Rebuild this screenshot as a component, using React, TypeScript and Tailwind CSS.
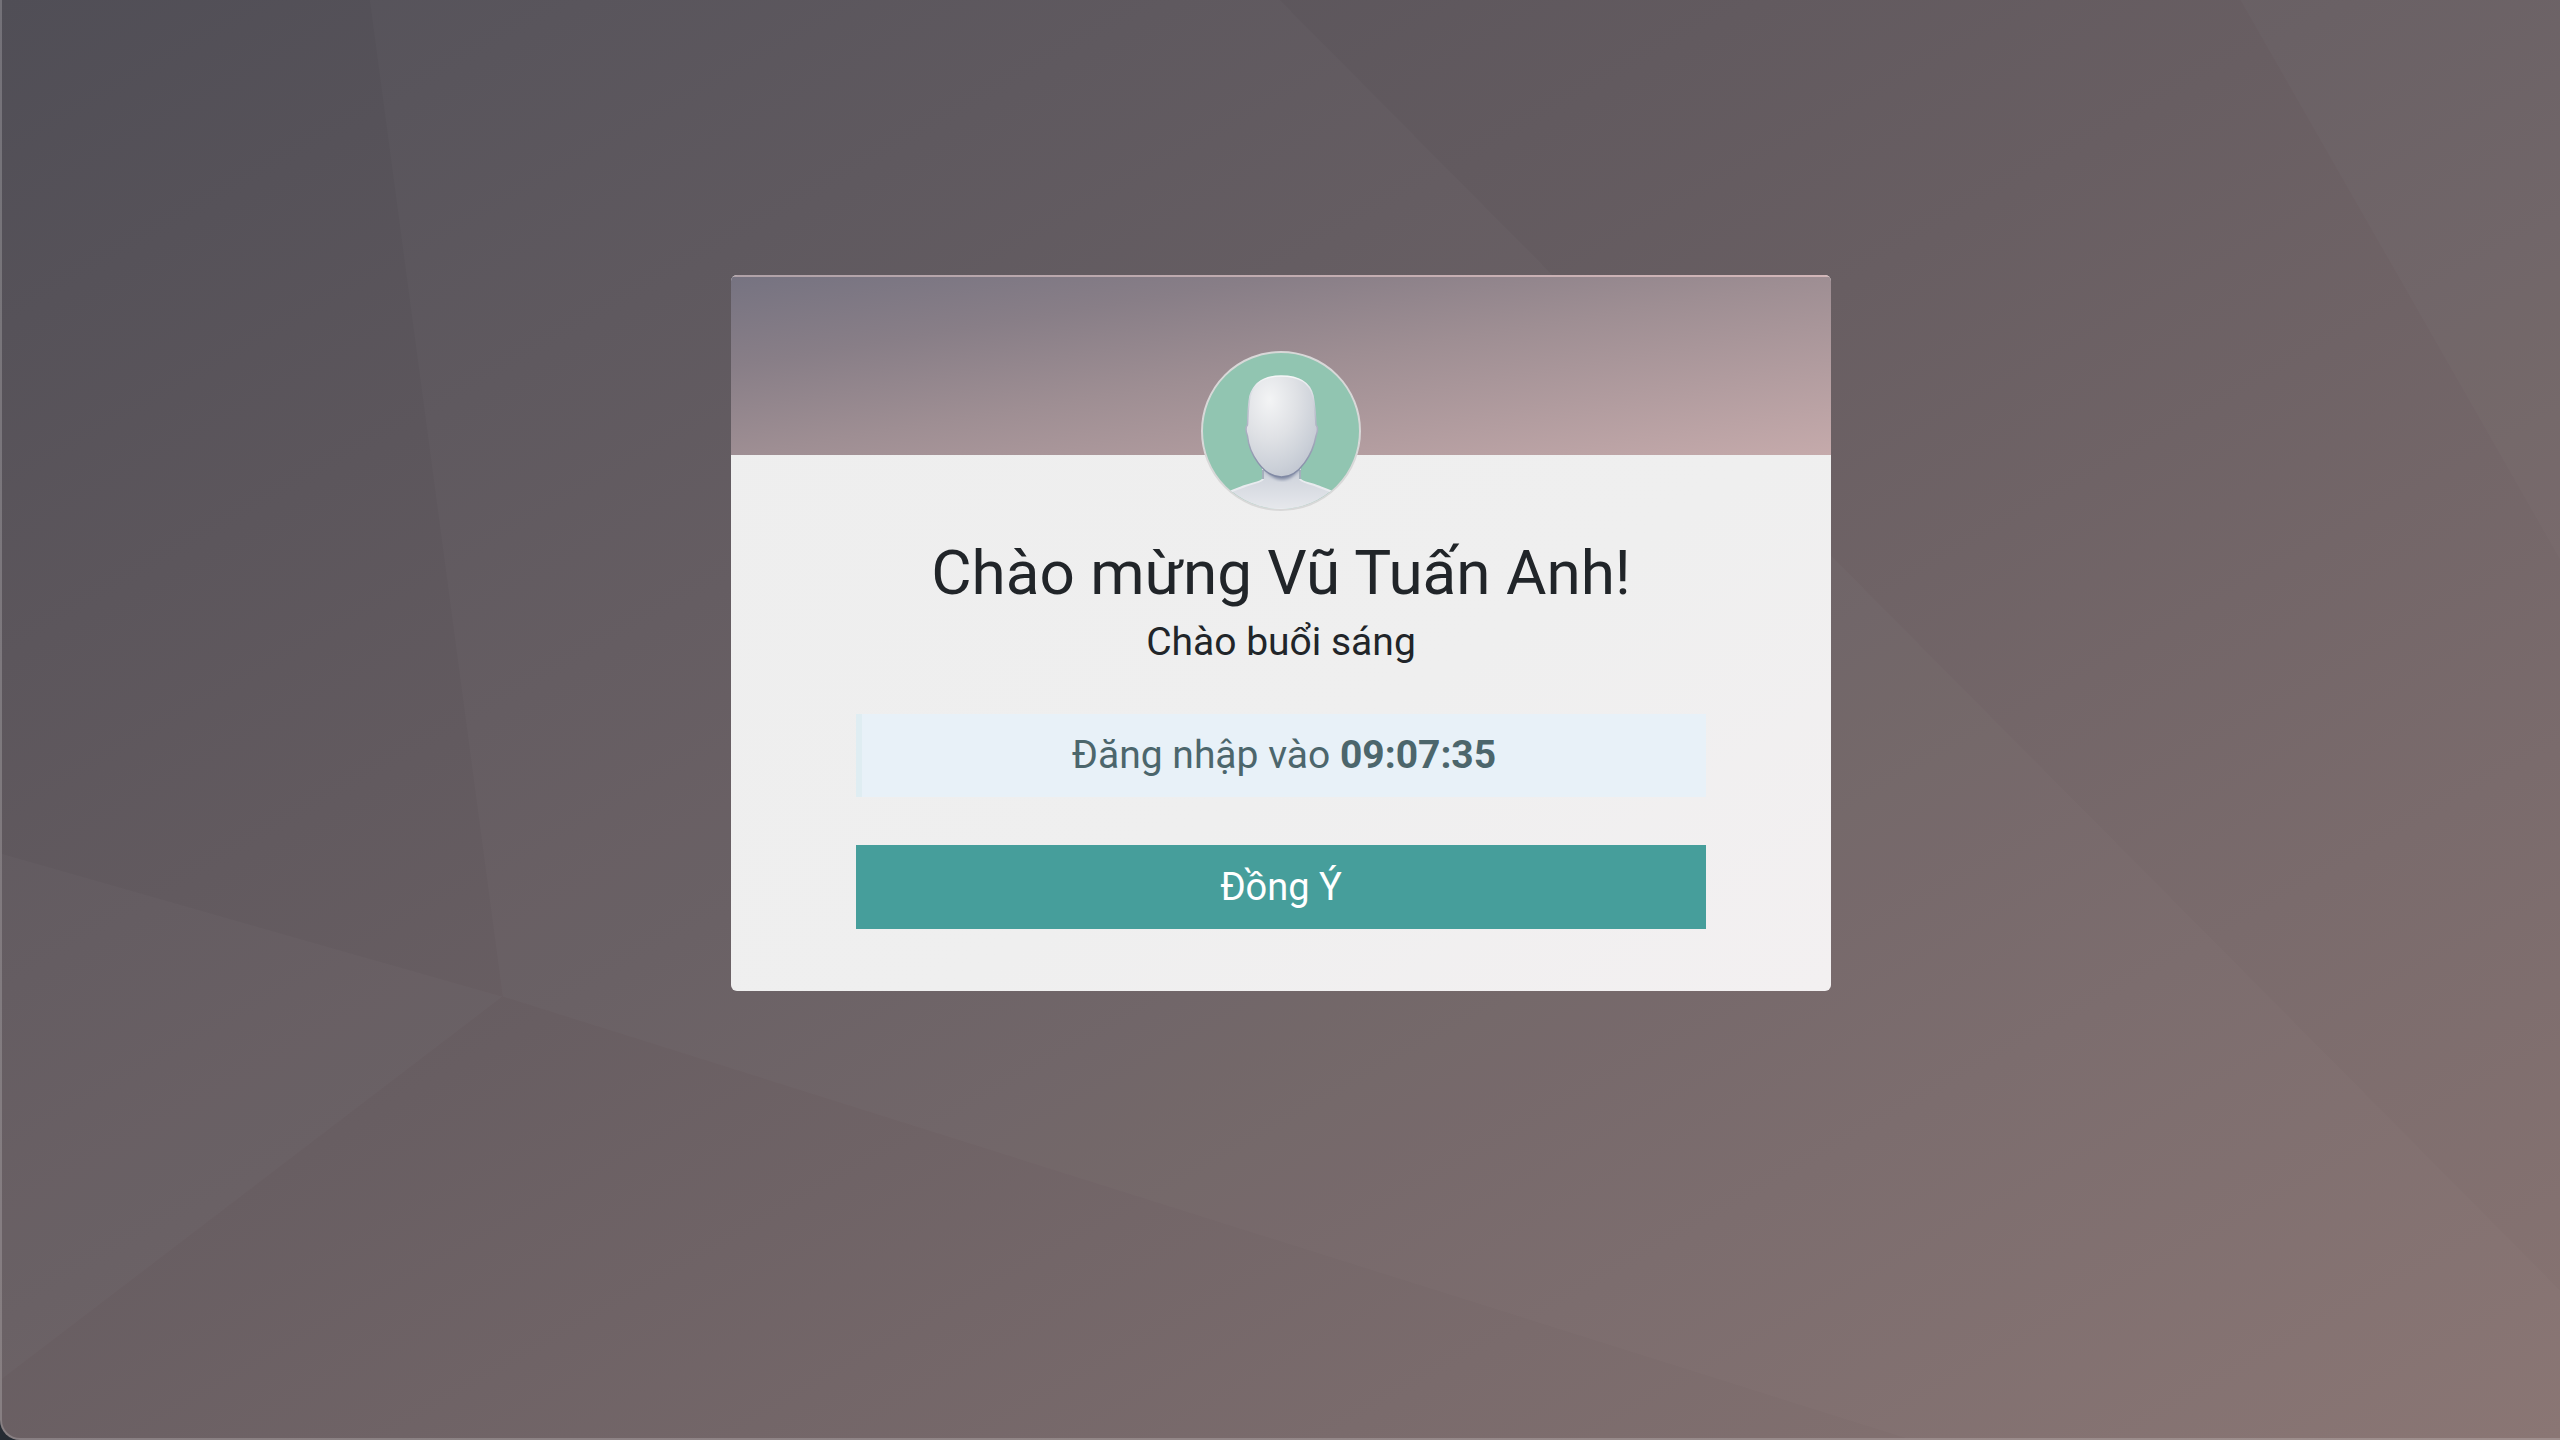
function Backdrop() {
  return (
    <svg className="absolute inset-0 h-full w-full" viewBox="0 0 2560 1440" preserveAspectRatio="none" aria-hidden="true">
      <g fill="#ffffff" fillOpacity="0.018">
        <path d="M368 0H1279L2560 1292V1440H1905L501 998Z" />
        <path d="M0 855L501 998L0 1381Z" />
        <path d="M2240 0H2560V560Z" />
      </g>
    </svg>
  );
}

function Avatar() {
  return (
    <div className="relative z-10 mx-auto -mt-[104px] h-40 w-40 overflow-hidden rounded-full border-2 border-[#d8d8d8] bg-[#91c5b1]">
      <svg viewBox="0 0 156 156" className="h-full w-full" role="img" aria-label="Avatar">
        <defs>
          <radialGradient id="head" cx="0.33" cy="0.24" r="0.85">
            <stop offset="0" stopColor="#f3f4f5" />
            <stop offset="0.45" stopColor="#dfe1e5" />
            <stop offset="0.8" stopColor="#cbd0d8" />
            <stop offset="1" stopColor="#bfc4cf" />
          </radialGradient>
          <linearGradient id="body" x1="0" y1="0" x2="0" y2="1">
            <stop offset="0" stopColor="#b9c1ce" />
            <stop offset="0.3" stopColor="#d2d6de" />
            <stop offset="1" stopColor="#e6e8ec" />
          </linearGradient>
          <linearGradient id="edge" x1="0" y1="0" x2="0" y2="1">
            <stop offset="0" stopColor="#f6f7f8" />
            <stop offset="0.4" stopColor="#b9bccb" />
            <stop offset="1" stopColor="#7f88a3" />
          </linearGradient>
          <filter id="soft">
            <feGaussianBlur stdDeviation="1.6" />
          </filter>
        </defs>
        <path
          d="M60 112V126C59 129 50 130 42 133C34 136 28 138 20 142V156H136V142C128 138 122 136 114 133C106 130 98 129 97 126V112Z"
          fill="url(#body)"
          stroke="#e9ebef"
          strokeWidth="2"
        />
        <path d="M60 117V126M97 117V126" stroke="#8d9cab" strokeWidth="1.5" />
        <path d="M60 114C66 123 72 127 79 127S92 123 98 114Z" fill="#8790a8" filter="url(#soft)" />
        <path
          d="M78 23C97 23 107 30 110 43C112 54 112.500 63 113 72C115 74 114.500 79 113 83C110 100 97 124 78.500 124S46 100 44.500 83C43 79 42.500 74 44.500 72C45 63 45 54 47 43C51 30 60 23 78 23Z"
          fill="url(#head)"
          stroke="url(#edge)"
          strokeWidth="1.5"
        />
      </svg>
    </div>
  );
}

export default function App() {
  return (
    <div className="bg-[#252b33] font-[Roboto,sans-serif]">
      <main className="relative min-h-screen overflow-hidden rounded-bl-[20px] border-b-2 border-l-2 border-white/20 bg-[linear-gradient(to_bottom_right,#504e56_0%,#685e62_46%,#7a6b6c_76%,#887472_100%)] bg-origin-border pt-[275px]">
        <Backdrop />
        <section className="relative mx-auto max-w-[1100px] overflow-hidden rounded-md bg-[linear-gradient(to_bottom_right,#eeeeee,#efefef_60%,#f3f0f1)]">
          <div className="h-0.5 bg-[linear-gradient(to_right,#b0a2a8,#d2b6b8)]" />
          <div className="h-[178px] bg-[linear-gradient(to_bottom_right,#767381_0%,#887e87_25%,#9e8e93_50%,#c5aaab_100%)]" />
          <Avatar />
          <div className="px-[125px] pt-6 pb-[62px] text-center text-[#212529]">
            <h1 className="text-[62px] leading-[75px]">Chào mừng Vũ Tuấn Anh!</h1>
            <p className="text-[39px] leading-[64px]">Chào buổi sáng</p>
            <p className="mt-10 border-l-[6px] border-[#dfedf2] bg-[#e8f1f8] py-3 text-[39px] leading-[59px] text-[#4c666c]">
              Đăng nhập vào <strong className="font-bold">09:07:35</strong>
            </p>
            <button type="button" className="mt-12 block w-full cursor-pointer bg-[#469e9b] py-3 text-[38px] leading-[60px] text-white">
              Đồng Ý
            </button>
          </div>
        </section>
      </main>
    </div>
  );
}
